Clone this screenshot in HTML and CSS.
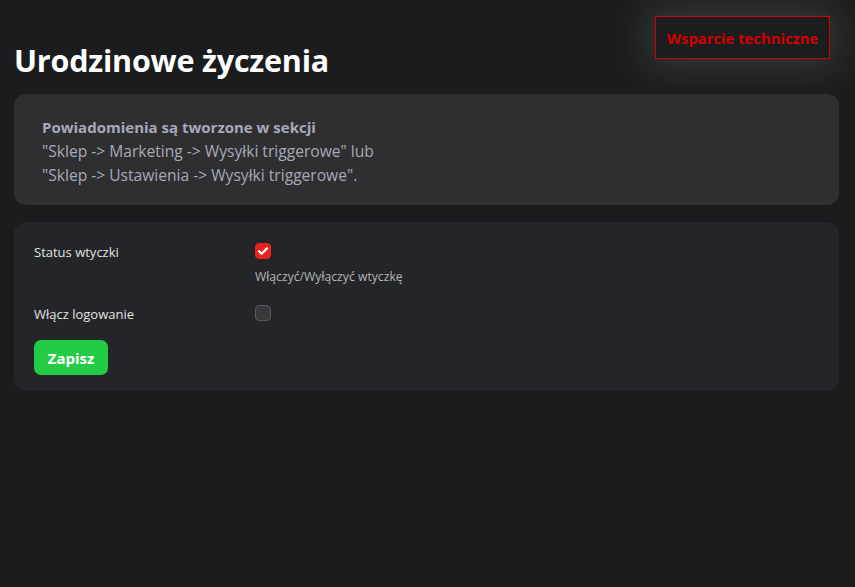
FILE: index.html
```html
<!DOCTYPE html>
<html lang="pl">
<head>
<meta charset="utf-8">
<title>Urodzinowe życzenia</title>
<link rel="stylesheet" href="styles.css">
</head>
<body>
<div class="page">
  <header class="header">
    <h1 class="title">Urodzinowe życzenia</h1>
    <a class="support" href="#">Wsparcie techniczne</a>
  </header>
  <section class="info">
    <p class="info-head">Powiadomienia są tworzone w sekcji</p>
    <p>"Sklep -&gt; Marketing -&gt; Wysyłki triggerowe" lub</p>
    <p>"Sklep -&gt; Ustawienia -&gt; Wysyłki triggerowe".</p>
  </section>
  <form class="card">
    <div class="row">
      <label class="label">Status wtyczki</label>
      <div class="field">
        <span class="check checked">
          <svg viewBox="0 0 16 16" width="16" height="16"><path d="M4 8.3l2.6 2.5L12 5.4" fill="none" stroke="#fff" stroke-width="2.2" stroke-linecap="round" stroke-linejoin="round"/></svg>
        </span>
        <div class="hint">Włączyć/Wyłączyć wtyczkę</div>
      </div>
    </div>
    <div class="row">
      <label class="label">Włącz logowanie</label>
      <div class="field">
        <span class="check"></span>
      </div>
    </div>
    <button class="save" type="button">Zapisz</button>
  </form>
</div>
</body>
</html>
```

FILE: styles.css
```css
* { box-sizing: border-box; }
html, body { margin: 0; padding: 0; }
body {
  background: #1b1c1e;
  font-family: "Open Sans", "Noto Sans", sans-serif;
  color: #e6e6e6;
  width: 855px;
  height: 587px;
  overflow: hidden;
}
.page {
  padding: 16px 16px 0 14px;
}
.header {
  display: flex;
  justify-content: space-between;
  align-items: flex-start;
  height: 78px;
}
.title {
  margin: 25px 0 0 0;
  font-size: 30.5px;
  line-height: 38px;
  font-weight: 700;
  color: #ffffff;
  letter-spacing: -0.2px;
}
.support {
  display: flex;
  align-items: center;
  justify-content: center;
  width: 175px;
  height: 43px;
  margin-right: 9px;
  border: 1px solid #d00000;
  background: #1c1d1f;
  color: #d40000;
  font-weight: 700;
  font-size: 14.8px;
  text-decoration: none;
  box-shadow: 0 0 40px 8px rgba(255, 255, 255, 0.13);
}
.info {
  background: #2f2f31;
  border-radius: 12px;
  padding: 21px 28px 18px;
  color: #a8a9b8;
  font-size: 15.6px;
  line-height: 24px;
}
.info p { margin: 0; }
.info-head { font-weight: 700; font-size: 15px; }
.card {
  margin-top: 17px;
  background: #242528;
  border-radius: 12px;
  padding: 18px 20px 16px;
}
.row {
  display: grid;
  grid-template-columns: 221px 1fr;
  margin-bottom: 16px;
}
.label {
  font-size: 13px;
  line-height: 20px;
  color: #e2e2e2;
  padding-top: 2px;
}
.field { padding-top: 3px; }
.check {
  display: block;
  width: 16px;
  height: 16px;
  border-radius: 4px;
  background: #3a3a3d;
  border: 1px solid #58585c;
}
.check.checked {
  background: #e8221f;
  border-color: #e8221f;
}
.check svg { display: block; margin: -1px; }
.hint {
  margin-top: 9px;
  font-size: 12.2px;
  line-height: 18px;
  color: #b4b4bc;
}
.save {
  display: block;
  height: 35px;
  width: 74px;
  margin-top: 7px;
  border: none;
  border-radius: 7px;
  background: #22cc44;
  color: #ffffff;
  font-family: inherit;
  font-weight: 700;
  font-size: 15px;
  padding: 0;
}
```
